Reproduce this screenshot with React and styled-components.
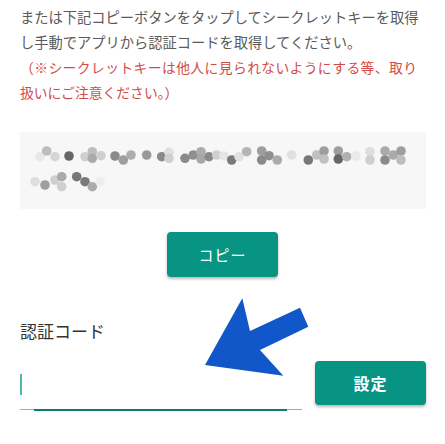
import styled, { createGlobalStyle } from "styled-components";

const GlobalStyle = createGlobalStyle`
  html, body {
    margin: 0;
    padding: 0;
    background: #fff;
  }
  body {
    font-family: "Noto Sans CJK JP", "Noto Sans", sans-serif;
  }
`;

// mosaic dots of the hidden secret key: [x, y, gray]
const dots = [
  [40, 156.7, "#e8e8e8"], [46.7, 151, "#bdbdbd"], [55, 156.7, "#d6d6d6"],
  [69, 156, "#666"], [85, 156.7, "#cfcfcf"], [92.3, 151.7, "#bdbdbd"],
  [92.3, 158.3, "#aaa"], [101, 155.7, "#cfcfcf"], [115, 156, "#8a8a8a"],
  [123.3, 160, "#9e9e9e"], [131, 155, "#adadad"], [146.7, 155, "#9a9a9a"],
  [161.7, 156.7, "#8a8a8a"], [169, 152.3, "#e0e0e0"], [169, 158.3, "#d0d0d0"],
  [185, 158.3, "#8a8a8a"], [193.3, 155, "#8f8f8f"], [201, 151.7, "#adadad"],
  [201, 159, "#a8a8a8"], [209, 156.7, "#8a8a8a"], [216.7, 155, "#d0d0d0"],
  [224, 156, "#e6e6e6"], [231.7, 160, "#7a7a7a"], [239, 156.7, "#e0e0e0"],
  [246.7, 151.7, "#b5b5b5"], [261.7, 151, "#9e9e9e"], [261.7, 160, "#8a8a8a"],
  [269, 155.7, "#8f8f8f"], [277.3, 160, "#acaca6"], [291.7, 155, "#e0e0e0"],
  [308.3, 160, "#777"], [316.7, 155, "#c0c0c0"], [324, 151, "#9e9e9e"],
  [324, 159, "#c0c0c0"], [338.3, 151, "#9e9e9e"], [338.3, 159, "#666"],
  [346.7, 156.7, "#b0b0b0"], [356, 156, "#eaeaea"], [370, 151.7, "#dedede"],
  [370, 160, "#cfcfcf"], [385, 151, "#aaa"], [385, 160, "#8a8a8a"],
  [393.3, 155, "#aaa"], [401, 151, "#9e9e9e"], [401, 160, "#bdbdbd"],
  [35, 181.7, "#dedede"], [45, 185, "#9e9e9e"], [55, 180, "#cfcfcf"],
  [61.7, 176.7, "#aaa"], [61.7, 186.7, "#cfcfcf"], [76.7, 176.7, "#777"],
  [85, 181.7, "#7a7a7a"], [92.3, 186.7, "#acacac"], [100, 181.7, "#eee"],
];

const App = () => {
  return (
    <Page>
      <GlobalStyle />
      <Notice>
        <Line $full>または下記コピーボタンをタップしてシークレットキーを取得</Line>
        <Line>し手動でアプリから認証コードを取得してください。</Line>
      </Notice>
      <Warning>
        <Line $full>（※シークレットキーは他人に見られないようにする等、取り</Line>
        <Line>扱いにご注意ください。）</Line>
      </Warning>

      <SecretBox aria-label="シークレットキー">
        <svg width="406" height="77" viewBox="20 132 406 77">
          {dots.map(([x, y, c], i) => (
            <circle key={i} cx={x} cy={y} r="4.8" fill={c} />
          ))}
        </svg>
      </SecretBox>

      <CopyRow>
        <Button>コピー</Button>
      </CopyRow>

      <Label>認証コード</Label>
      <FormRow>
        <Field>
          <Caret />
          <CodeInput type="text" />
        </Field>
        <Button $wide>設定</Button>
      </FormRow>

      <Arrow width="445" height="444" viewBox="0 0 445 444">
        <polygon
          points="205,365 242.3,298.3 250,331 300,307.7 308.3,326.7 260,350 283.3,375.7"
          fill="#1257c9"
        />
      </Arrow>
    </Page>
  );
};

const Page = styled.div`
  position: relative;
  width: 445px;
  height: 444px;
  box-sizing: border-box;
  padding: 3.5px 19px 0 20px;
  overflow: hidden;
`;

const Notice = styled.p`
  margin: 0;
  width: 397px;
  font-size: 14.25px;
  line-height: 25.5px;
  color: #5a5a5a;
`;

const Warning = styled(Notice)`
  font-size: 13.8px;
  color: #d24b4b;
`;

const Line = styled.span`
  display: block;
  white-space: nowrap;
  text-align: ${(p) => (p.$full ? "justify" : "left")};
  text-align-last: ${(p) => (p.$full ? "justify" : "auto")};
`;

const SecretBox = styled.div`
  margin-top: 26.5px;
  height: 77px;
  background: #f7f7f7;

  svg {
    display: block;
  }
`;

const CopyRow = styled.div`
  display: flex;
  justify-content: center;
  margin-top: 23px;
  padding-right: 1px;
`;

const Button = styled.button`
  width: 111px;
  height: ${(p) => (p.$wide ? "44px" : "45px")};
  border: none;
  border-radius: 4px;
  background: #079482;
  color: #fff;
  font-family: "Noto Sans CJK JP", sans-serif;
  font-size: ${(p) => (p.$wide ? "16px" : "15px")};
  font-weight: ${(p) => (p.$wide ? 700 : 400)};
  letter-spacing: 1px;
  box-shadow: 0 2px 3px rgba(0, 0, 0, 0.28);
  flex-shrink: 0;
`;

const Label = styled.div`
  margin-top: 41.5px;
  font-size: 17px;
  line-height: 24px;
  color: #333;
`;

const FormRow = styled.div`
  display: flex;
  align-items: flex-start;
  gap: 13px;
  margin-top: 18.5px;
`;

const Field = styled.div`
  position: relative;
  flex: 1;
  height: 49px;
  display: flex;
  align-items: flex-end;
  padding-bottom: 14px;
  box-sizing: border-box;
  border-bottom: 1px solid #a8a8a8;

  &::after {
    content: "";
    position: absolute;
    left: 14px;
    right: 15px;
    bottom: -2px;
    height: 2.5px;
    background: #0b7d6f;
  }
`;

const Caret = styled.span`
  width: 2px;
  height: 21px;
  background: #4db6a8;
  flex-shrink: 0;
`;

const CodeInput = styled.input`
  flex: 1;
  min-width: 0;
  border: none;
  outline: none;
  background: transparent;
  font-size: 16px;
`;

const Arrow = styled.svg`
  position: absolute;
  left: 0;
  top: 0;
  pointer-events: none;
`;

export default App;
